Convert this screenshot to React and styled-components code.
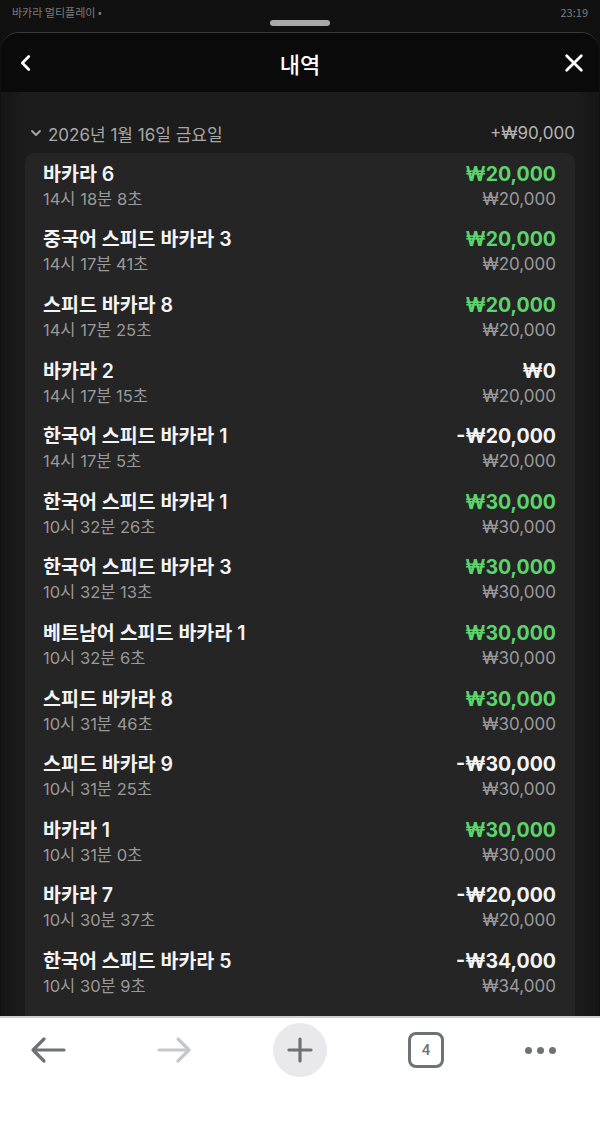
import React from 'react';
import styled, {createGlobalStyle} from 'styled-components';

const GlobalStyle = createGlobalStyle`
	html, body {
		margin: 0;
		padding: 0;
		background: #ffffff;
	}
	body {
		font-family: Inter, "Noto Sans CJK KR", sans-serif;
		-webkit-font-smoothing: antialiased;
	}
`;

const rows = [
	{name: '바카라 6', time: '14시 18분 8초', result: '₩20,000', bet: '₩20,000', kind: 'win'},
	{name: '중국어 스피드 바카라 3', time: '14시 17분 41초', result: '₩20,000', bet: '₩20,000', kind: 'win'},
	{name: '스피드 바카라 8', time: '14시 17분 25초', result: '₩20,000', bet: '₩20,000', kind: 'win'},
	{name: '바카라 2', time: '14시 17분 15초', result: '₩0', bet: '₩20,000', kind: 'even'},
	{name: '한국어 스피드 바카라 1', time: '14시 17분 5초', result: '-₩20,000', bet: '₩20,000', kind: 'loss'},
	{name: '한국어 스피드 바카라 1', time: '10시 32분 26초', result: '₩30,000', bet: '₩30,000', kind: 'win'},
	{name: '한국어 스피드 바카라 3', time: '10시 32분 13초', result: '₩30,000', bet: '₩30,000', kind: 'win'},
	{name: '베트남어 스피드 바카라 1', time: '10시 32분 6초', result: '₩30,000', bet: '₩30,000', kind: 'win'},
	{name: '스피드 바카라 8', time: '10시 31분 46초', result: '₩30,000', bet: '₩30,000', kind: 'win'},
	{name: '스피드 바카라 9', time: '10시 31분 25초', result: '-₩30,000', bet: '₩30,000', kind: 'loss'},
	{name: '바카라 1', time: '10시 31분 0초', result: '₩30,000', bet: '₩30,000', kind: 'win'},
	{name: '바카라 7', time: '10시 30분 37초', result: '-₩20,000', bet: '₩20,000', kind: 'loss'},
	{name: '한국어 스피드 바카라 5', time: '10시 30분 9초', result: '-₩34,000', bet: '₩34,000', kind: 'loss'},
];

export default function App() {
	return (
		<Screen>
			<GlobalStyle />
			<StatusBar>
				<span className="app">바카라 멀티플레이 •</span>
				<Handle />
				<span className="clock">23:19</span>
			</StatusBar>

			<Sheet>
				<Header>
					<IconButton aria-label="back">
						<svg width="22" height="22" viewBox="0 0 24 24" fill="none">
							<path d="M15 5l-7 7 7 7" stroke="#fff" strokeWidth="3" strokeLinecap="round" strokeLinejoin="round" />
						</svg>
					</IconButton>
					<Title>내역</Title>
					<IconButton aria-label="close">
						<svg width="22" height="22" viewBox="0 0 24 24" fill="none">
							<path d="M4 4l16 16M20 4L4 20" stroke="#fff" strokeWidth="3" strokeLinecap="round" />
						</svg>
					</IconButton>
				</Header>

				<Body>
					<DateRow>
						<div className="day">
							<svg width="12" height="12" viewBox="0 0 12 12" fill="none">
								<path d="M2 4l4 4 4-4" stroke="#a8a8a8" strokeWidth="1.8" strokeLinecap="round" strokeLinejoin="round" />
							</svg>
							2026년 1월 16일 금요일
						</div>
						<div className="sum">+₩90,000</div>
					</DateRow>

					<Card>
						{rows.map((row, i) => (
							<Row key={i}>
								<div>
									<Name>{row.name}</Name>
									<Time>{row.time}</Time>
								</div>
								<Amounts>
									<Result $kind={row.kind}>{row.result}</Result>
									<Bet>{row.bet}</Bet>
								</Amounts>
							</Row>
						))}
					</Card>
				</Body>
			</Sheet>

			<BrowserBar>
				<NavItem aria-label="back">
					<svg width="38" height="38" viewBox="0 0 38 38" fill="none">
						<path d="M35 19H4M15 8L4 19l11 11" stroke="#6e7175" strokeWidth="3.2" strokeLinecap="round" strokeLinejoin="round" />
					</svg>
				</NavItem>
				<NavItem aria-label="forward">
					<svg width="38" height="38" viewBox="0 0 38 38" fill="none">
						<path d="M4 19h29M23 8l11 11-11 11" stroke="#c6c8cb" strokeWidth="3.2" strokeLinecap="round" strokeLinejoin="round" />
					</svg>
				</NavItem>
				<NavItem aria-label="new tab">
					<PlusCircle>
						<svg width="28" height="28" viewBox="0 0 28 28" fill="none">
							<path d="M14 3v22M3 14h22" stroke="#6e7175" strokeWidth="3.2" strokeLinecap="round" />
						</svg>
					</PlusCircle>
				</NavItem>
				<NavItem aria-label="tabs">
					<TabCount>4</TabCount>
				</NavItem>
				<NavItem aria-label="more" $shift={-12}>
					<Dots>
						<i />
						<i />
						<i />
					</Dots>
				</NavItem>
			</BrowserBar>
		</Screen>
	);
}

const Screen = styled.div`
	width: 600px;
	height: 1135px;
	display: flex;
	flex-direction: column;
	background: #111111;
	overflow: hidden;
`;

const StatusBar = styled.div`
	height: 32px;
	display: grid;
	grid-template-columns: 1fr auto 1fr;
	align-items: start;
	padding: 0 12px;
	box-sizing: border-box;
	font-family: "Noto Sans CJK KR", sans-serif;
	font-size: 11px;
	line-height: 24px;
	color: #7c7c7c;

	.clock {
		justify-self: end;
	}
`;

const Handle = styled.div`
	width: 60px;
	height: 6px;
	margin-top: 20px;
	border-radius: 3px;
	background: #a9a9a9;
`;

const Sheet = styled.div`
	flex: 1;
	min-height: 0;
	display: flex;
	flex-direction: column;
	overflow: hidden;
	margin: 0 1px;
	border-radius: 18px 18px 0 0;
	border-top: 1px solid #3a3a3a;
	background: #1a1a1a;
`;

const Header = styled.div`
	height: 59px;
	flex-shrink: 0;
	display: grid;
	grid-template-columns: 50px 1fr 50px;
	align-items: center;
	background: #0a0a0a;
`;

const IconButton = styled.div`
	display: flex;
	align-items: center;
	justify-content: center;
	height: 100%;
`;

const Title = styled.h1`
	margin: 0;
	text-align: center;
	font-family: "Noto Sans CJK KR", sans-serif;
	font-size: 22px;
	font-weight: 500;
	color: #ffffff;
`;

const Body = styled.div`
	flex: 1;
	min-height: 0;
	padding: 0 24px;
	overflow: hidden;
	background: linear-gradient(90deg, #161616 0, #1c1c1c 24px, #1c1c1c calc(100% - 24px), #161616 100%);
`;

const DateRow = styled.div`
	display: flex;
	justify-content: space-between;
	align-items: center;
	height: 22px;
	margin: 30px 0 9px;
	font-size: 17px;
	color: #a8a8a8;

	.day {
		display: flex;
		align-items: center;
		gap: 6px;
		padding-left: 5px;
	}

	.sum {
		color: #b4b4b4;
	}
`;

const Card = styled.div`
	background: #252525;
	border-radius: 10px;
	padding: 0 19px 40px 18px;
`;

const Row = styled.div`
	height: 65.6px;
	display: flex;
	justify-content: space-between;
	align-items: center;
`;

const Name = styled.div`
	font-size: 19.5px;
	font-weight: 600;
	line-height: 27px;
	color: #f4f4f4;
`;

const Time = styled.div`
	font-size: 16.5px;
	line-height: 23px;
	color: #9a9a9a;
`;

const Amounts = styled.div`
	text-align: right;
`;

const Result = styled.div`
	font-size: 19.5px;
	font-weight: 700;
	line-height: 27px;
	color: ${(p) => (p.$kind === 'win' ? '#5bd46b' : '#f4f4f4')};
`;

const Bet = styled.div`
	font-size: 17px;
	line-height: 23px;
	color: #9a9a9a;
`;

const BrowserBar = styled.div`
	height: 119px;
	flex-shrink: 0;
	display: grid;
	grid-template-columns: repeat(5, 70px);
	column-gap: 56px;
	align-content: start;
	padding: 2px 0 0 13px;
	background: #ffffff;
	border-top: 2px solid #cfcfcf;
	box-sizing: border-box;
`;

const NavItem = styled.div`
	width: 70px;
	height: 60px;
	display: flex;
	align-items: center;
	justify-content: center;
	margin-left: ${(p) => p.$shift || 0}px;
`;

const PlusCircle = styled.div`
	width: 54px;
	height: 54px;
	border-radius: 50%;
	background: #e9e9ec;
	display: flex;
	align-items: center;
	justify-content: center;
`;

const TabCount = styled.div`
	width: 30px;
	height: 30px;
	border: 3px solid #6e7175;
	border-radius: 8px;
	display: flex;
	align-items: center;
	justify-content: center;
	font-family: Roboto, sans-serif;
	font-size: 15px;
	font-weight: 500;
	color: #6e7175;
`;

const Dots = styled.div`
	display: flex;
	gap: 5px;

	i {
		width: 7px;
		height: 7px;
		border-radius: 50%;
		background: #6e7175;
	}
`;
